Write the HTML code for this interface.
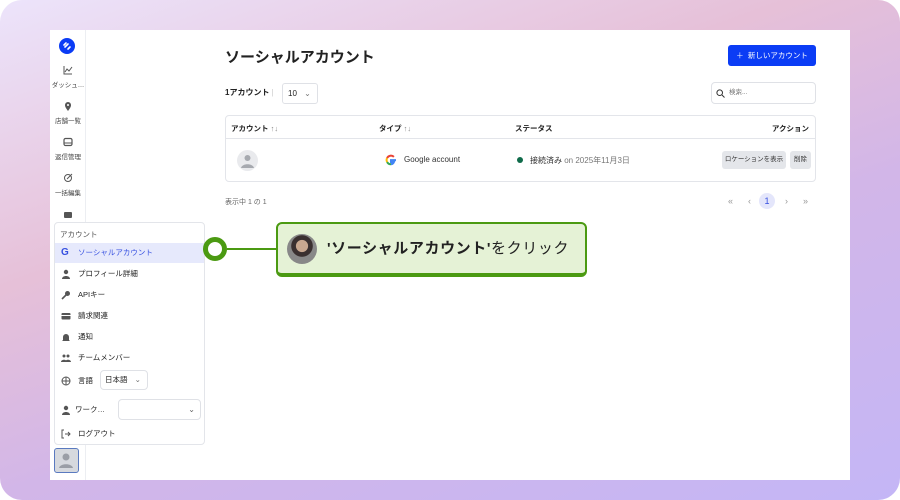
<!DOCTYPE html>
<html><head><meta charset="utf-8"><style>
*{box-sizing:border-box;margin:0;padding:0}
body{width:900px;height:500px;overflow:hidden;background:#fff;font-family:"Liberation Sans","Noto Sans CJK JP",sans-serif;color:#222}
.bg{position:absolute;left:0;top:0;width:900px;height:500px;border-radius:22px;background:linear-gradient(160deg,#ece4fb 0%,#e6c0d8 35%,#d2b6e8 60%,#c4b6f6 100%)}
.panel{position:absolute;left:50px;top:30px;width:800px;height:450px;background:#fff;overflow:hidden}
.abs{position:absolute}
.side{left:0;top:0;width:36px;height:450px;border-right:1px solid #eceef2}
.nav{position:absolute;left:0;width:36px;text-align:center;font-size:6.5px;color:#444}
.nav svg{display:block;margin:0 auto 4px}
h1{position:absolute;left:175px;top:16px;font-size:15px;font-weight:bold;color:#222}
.btn{left:678px;top:15px;width:88px;height:21px;background:#0b3cf5;border-radius:3px;color:#fff;font-size:7.5px;line-height:21px;text-align:center}
.tbl{left:175px;top:85px;width:591px;height:67px;border:1px solid #e3e5ea;border-radius:4px}
.th{font-size:7.5px;font-weight:bold;top:7px}
.gray{background:#e4e6ea;border-radius:3px;font-size:6.5px;color:#333;text-align:center;line-height:18px;height:18px}
.menu{left:4px;top:192px;width:151px;height:223px;border:1px solid #e3e5ea;border-radius:4px;background:#fff}
.mi{position:absolute;left:0;width:149px;height:20px;font-size:7.5px;line-height:20px;color:#222}
.mi .ic{position:absolute;left:6px;top:5px;width:10px;height:10px}
.mi span{position:absolute;left:23px}
</style></head><body>
<div class="bg"></div>
<div class="panel">
 <div class="abs side">
  <div class="abs" style="left:9px;top:8px;width:16px;height:16px;border-radius:50%;background:#0b3cf5"><svg width="16" height="16" viewBox="0 0 16 16"><path d="M6 9l3-3M5 7l2-2M9 11l2-2" stroke="#fff" stroke-width="1.6" fill="none" stroke-linecap="round"/></svg></div>
  <div class="nav" style="top:35px"><svg width="10" height="10" viewBox="0 0 10 10"><path d="M1 1v8h8M2 7l2-3 2 2 3-4" stroke="#555" fill="none" stroke-width="1"/></svg>ダッシュ…</div>
  <div class="nav" style="top:71px"><svg width="10" height="10" viewBox="0 0 10 10"><path d="M5 10C2 6 2 5 2 4a3 3 0 016 0c0 1 0 2-3 6z" fill="#555"/><circle cx="5" cy="4" r="1" fill="#fff"/></svg>店舗一覧</div>
  <div class="nav" style="top:107px"><svg width="10" height="10" viewBox="0 0 10 10"><rect x="1" y="1.5" width="8" height="7" rx="1.5" stroke="#555" stroke-width="1.2" fill="none"/><path d="M1 6h8" stroke="#555"/></svg>返信管理</div>
  <div class="nav" style="top:143px"><svg width="10" height="10" viewBox="0 0 10 10"><circle cx="5" cy="5" r="3.5" stroke="#555" fill="none"/><path d="M4 6l5-5" stroke="#555"/></svg>一括編集</div>
  <div class="nav" style="top:180px"><svg width="10" height="10" viewBox="0 0 10 10"><rect x="1" y="2" width="8" height="6" rx="1" fill="#555"/></svg></div>
  <div class="abs" style="left:4px;top:418px;width:25px;height:25px;border:1.5px solid #5a7ac0;border-radius:3px;background:#d6d9de"><svg width="22" height="22" viewBox="0 0 22 22"><circle cx="11" cy="8" r="3.5" fill="#9a9ea6"/><path d="M4 19c1-5 13-5 14 0z" fill="#9a9ea6"/></svg></div>
 </div>

 <h1>ソーシャルアカウント</h1>
 <div class="abs btn">＋&nbsp; 新しいアカウント</div>

 <div class="abs" style="left:175px;top:57px;font-size:8px;font-weight:bold;line-height:12px">1アカウント <span style="color:#ccc;font-weight:normal">|</span></div>
 <div class="abs" style="left:232px;top:53px;width:36px;height:21px;border:1px solid #dfe1e6;border-radius:3px;font-size:8px;line-height:19px;padding-left:5px">10 <span style="color:#777;margin-left:5px">⌄</span></div>
 <div class="abs" style="left:661px;top:52px;width:105px;height:22px;border:1px solid #dfe1e6;border-radius:4px;font-size:6.5px;line-height:20px;padding-left:17px;color:#777">検索...
  <svg class="abs" style="left:4px;top:6px" width="9" height="9" viewBox="0 0 9 9"><circle cx="3.7" cy="3.7" r="2.8" stroke="#333" fill="none"/><path d="M6 6l2.5 2.5" stroke="#333"/></svg></div>

 <div class="abs tbl">
  <div class="abs" style="left:0;top:22px;width:589px;border-top:1px solid #e3e5ea"></div>
  <div class="abs th" style="left:5px">アカウント <span style="color:#888;font-weight:normal">↑↓</span></div>
  <div class="abs th" style="left:153px">タイプ <span style="color:#888;font-weight:normal">↑↓</span></div>
  <div class="abs th" style="left:289px">ステータス</div>
  <div class="abs th" style="right:6px">アクション</div>
  <div class="abs" style="left:11px;top:34px;width:21px;height:21px;border-radius:50%;background:#e9eaed"><svg width="21" height="21" viewBox="0 0 21 21"><circle cx="10.5" cy="8" r="3" fill="#a6a9af"/><path d="M4 18c1-5 12-5 13 0z" fill="#a6a9af"/></svg></div>
  <svg class="abs" style="left:159px;top:38px" width="12" height="12" viewBox="0 0 12 12"><path d="M11 6.1H6v2h2.9A3.3 3.3 0 016 10.3" stroke="#4285f4" stroke-width="2" fill="none"/><path d="M6 10.3A4.3 4.3 0 012.1 8" stroke="#34a853" stroke-width="2" fill="none"/><path d="M2.1 8a4.3 4.3 0 010-4" stroke="#fbbc05" stroke-width="2" fill="none"/><path d="M2.1 4A4.3 4.3 0 018.9 2.9" stroke="#ea4335" stroke-width="2" fill="none"/></svg>
  <div class="abs" style="left:178px;top:39px;font-size:8px;color:#333">Google account</div>
  <div class="abs" style="left:291px;top:41px;width:6px;height:6px;border-radius:50%;background:#0f6b4a"></div>
  <div class="abs" style="left:304px;top:39px;font-size:8px;color:#333">接続済み <span style="color:#777">on 2025年11月3日</span></div>
  <div class="abs gray" style="left:496px;top:35px;width:64px">ロケーションを表示</div>
  <div class="abs gray" style="left:564px;top:35px;width:21px">削除</div>
 </div>

 <div class="abs" style="left:175px;top:167px;font-size:7px;color:#666">表示中 1 の 1</div>
 <div class="abs" style="left:678px;top:166px;font-size:9px;color:#999;width:90px">
  <span class="abs" style="left:0">«</span><span class="abs" style="left:20px">‹</span>
  <span class="abs" style="left:31px;top:-3px;width:16px;height:16px;border-radius:50%;background:#e4e6fb;color:#3650e0;text-align:center;line-height:16px">1</span>
  <span class="abs" style="left:57px">›</span><span class="abs" style="left:75px">»</span></div>

 <div class="abs menu">
  <div class="abs" style="left:5px;top:6px;font-size:7.5px;color:#555">アカウント</div>
  <div class="mi" style="top:20px;background:#e6e9fc;color:#3650e0"><b class="ic" style="color:#3650e0;font-size:10px;top:0">G</b><span>ソーシャルアカウント</span></div>
  <div class="mi" style="top:41px"><svg class="ic" viewBox="0 0 10 10"><circle cx="5" cy="3" r="2.2" fill="#555"/><path d="M1 10c0-4 8-4 8 0z" fill="#555"/></svg><span>プロフィール詳細</span></div>
  <div class="mi" style="top:62px"><svg class="ic" viewBox="0 0 10 10"><circle cx="6.5" cy="3.5" r="2.5" fill="#555"/><path d="M5 5L1 9" stroke="#555" stroke-width="1.6"/></svg><span>APIキー</span></div>
  <div class="mi" style="top:83px"><svg class="ic" viewBox="0 0 10 10"><rect x="0.5" y="2" width="9" height="6.5" rx="1" fill="#555"/><rect x="0.5" y="4" width="9" height="1" fill="#fff"/></svg><span>請求関連</span></div>
  <div class="mi" style="top:104px"><svg class="ic" viewBox="0 0 10 10"><path d="M2 8V5a3 3 0 016 0v3l1 1H1z" fill="#555"/></svg><span>通知</span></div>
  <div class="mi" style="top:125px"><svg class="ic" viewBox="0 0 10 10"><circle cx="3" cy="3" r="1.5" fill="#555"/><circle cx="7" cy="3" r="1.5" fill="#555"/><path d="M0 9c0-3 6-3 6 0zM4 9c0-3 6-3 6 0z" fill="#555"/></svg><span>チームメンバー</span></div>
  <div class="mi" style="top:148px"><svg class="ic" viewBox="0 0 10 10"><circle cx="5" cy="5" r="4" stroke="#555" fill="none"/><path d="M1 5h8M5 1v8" stroke="#555"/></svg><span>言語</span></div>
  <div class="abs" style="left:45px;top:147px;width:48px;height:20px;border:1px solid #dfe1e6;border-radius:4px;font-size:7.5px;line-height:18px;padding-left:4px">日本語 <span style="color:#666;margin-left:5px">⌄</span></div>
  <div class="mi" style="top:177px"><svg class="ic" viewBox="0 0 10 10"><circle cx="5" cy="3" r="2.2" fill="#555"/><path d="M1 10c0-4 8-4 8 0z" fill="#555"/></svg><span style="left:20px">ワーク…</span></div>
  <div class="abs" style="left:63px;top:176px;width:83px;height:21px;border:1px solid #dfe1e6;border-radius:4px;font-size:8px;color:#666;text-align:right;padding-right:5px;line-height:19px">⌄</div>
  <div class="mi" style="top:201px"><svg class="ic" viewBox="0 0 10 10"><path d="M3 1H1v8h2" stroke="#555" fill="none"/><path d="M4 5h5M7 3l2 2-2 2" stroke="#555" fill="none"/></svg><span>ログアウト</span></div>
 </div>
</div>

<div class="abs" style="left:203px;top:237px;width:24px;height:24px;border-radius:50%;border:5px solid #4b9a12;background:#fff"></div>
<div class="abs" style="left:227px;top:248px;width:50px;height:2px;background:#4b9a12"></div>
<div class="abs" style="left:276px;top:222px;width:311px;height:55px;border:2.5px solid #4b9a12;border-bottom-width:4px;border-radius:6px;background:#e5f2d6"></div>
<div class="abs" style="left:287px;top:234px;width:30px;height:30px;border-radius:50%;background:radial-gradient(circle at 50% 40%,#c9a890 0 25%,#3a3030 27% 45%,#888 47%)"></div>
<div class="abs" style="left:327px;top:239px;font-size:15px;color:#222;line-height:20px;letter-spacing:0.6px"><b>'ソーシャルアカウント'</b>をクリック</div>
</body></html>
